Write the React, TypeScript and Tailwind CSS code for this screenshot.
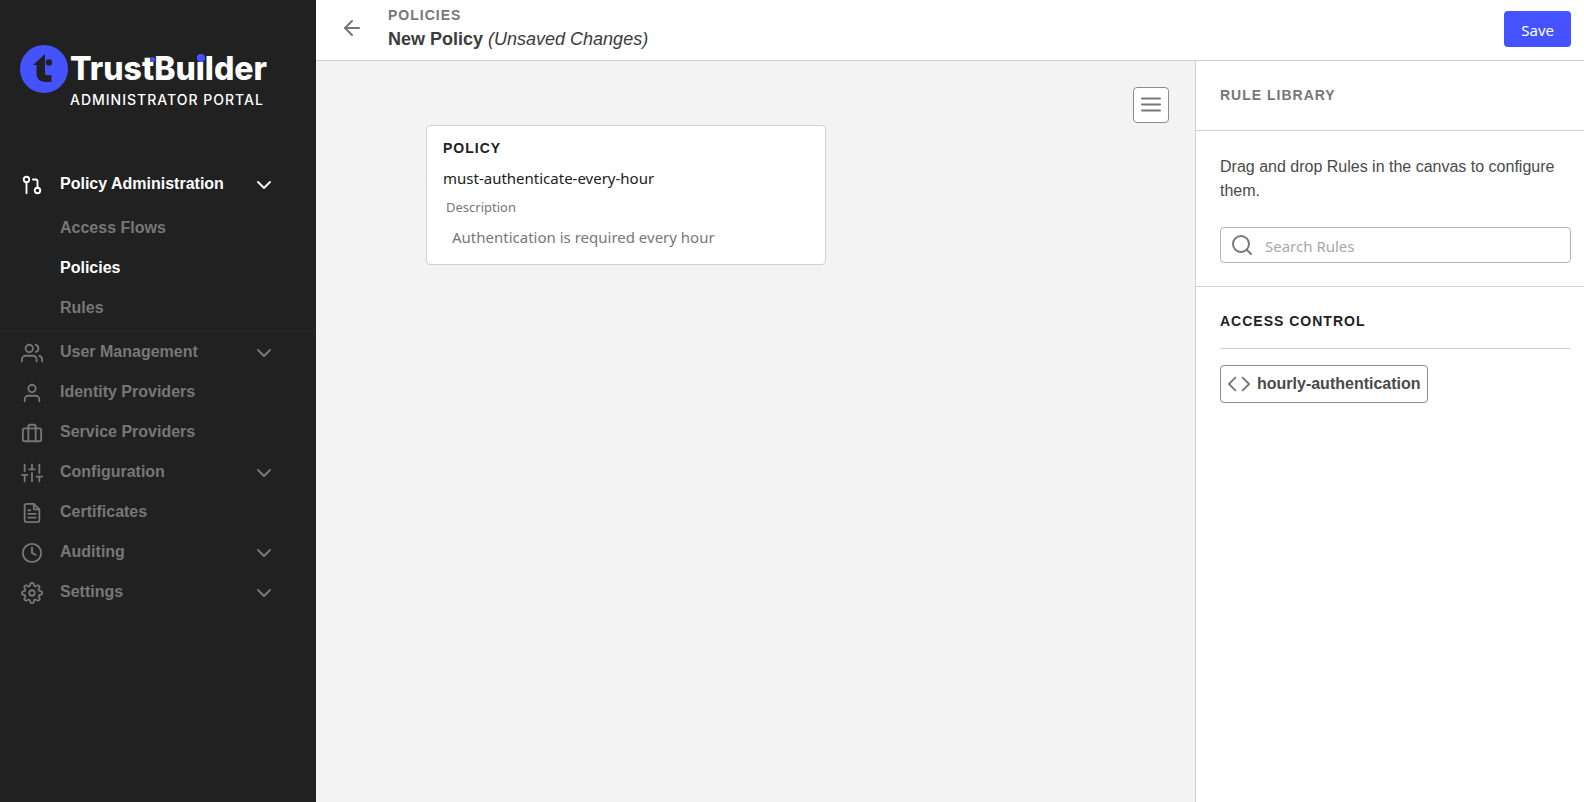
import type { ReactNode } from "react";
import {
    FiArrowLeft,
    FiChevronDown,
    FiClock,
    FiFileText,
    FiGitPullRequest,
    FiSearch,
    FiSettings,
    FiSliders,
    FiUser,
    FiUsers,
} from "react-icons/fi";

type NavItem = {
    label: string;
    icon: ReactNode;
    children?: string[];
    expandable?: boolean;
};

const ACTIVE_PAGE = "Policies";

// Suitcase with two straps
function SuitcaseIcon() {
    return (
        <svg
            width="22"
            height="22"
            viewBox="0 0 24 24"
            fill="none"
            stroke="currentColor"
            strokeWidth="2"
            strokeLinecap="round"
            strokeLinejoin="round"
            aria-hidden="true"
        >
            <rect x="2" y="7" width="20" height="14" rx="2" />
            <path d="M8 21V5a2 2 0 0 1 2-2h4a2 2 0 0 1 2 2v16" />
        </svg>
    );
}

const navItems: NavItem[] = [
    {
        label: "Policy Administration",
        icon: <FiGitPullRequest size={22} />,
        children: ["Access Flows", "Policies", "Rules"],
        expandable: true,
    },
    { label: "User Management", icon: <FiUsers size={22} />, expandable: true },
    { label: "Identity Providers", icon: <FiUser size={22} /> },
    { label: "Service Providers", icon: <SuitcaseIcon /> },
    { label: "Configuration", icon: <FiSliders size={22} />, expandable: true },
    { label: "Certificates", icon: <FiFileText size={22} /> },
    { label: "Auditing", icon: <FiClock size={22} />, expandable: true },
    { label: "Settings", icon: <FiSettings size={22} />, expandable: true },
];

function Logo() {
    return (
        <div className="flex gap-0.5 pt-[45px] pl-5 text-white">
            <svg width="48" height="48" viewBox="0 0 48 48" className="shrink-0" aria-hidden="true">
                <circle cx="24" cy="24" r="24" fill="#4552ff" />
                <path
                    d="M25 9v19c0 1.600.6 2.300 2 2.300h4.500V37H25.500c-5.800 0-9-3.200-9-8.700V20H13z"
                    fill="#212121"
                />
                <circle cx="29" cy="17.500" r="3.200" fill="#212121" />
            </svg>
            <div className="pt-2">
                <p className="font-[Inter,sans-serif] text-[32px] leading-8 font-extrabold">
                    Trus
                    <span className="relative">
                        t
                        <span className="absolute top-2 -right-px size-[5px] rounded-full bg-[#4552ff]" />
                    </span>
                    Bu
                    <span className="relative">
                        i
                        <span className="absolute top-[5px] left-px size-2 rounded-full bg-[#4552ff]" />
                    </span>
                    lder
                </p>
                <p className="pt-1 font-[Inter,sans-serif] text-[14px] leading-[22px] font-medium tracking-[1px]">
                    ADMINISTRATOR PORTAL
                </p>
            </div>
        </div>
    );
}

function NavRow({ item }: { item: NavItem }) {
    const open = !!item.children;
    const rowClass = `flex h-10 w-full items-center pl-5 pr-10 text-left ${
        open ? "text-white" : "text-[#777777]"
    }`;
    const content = (
        <>
            <span className="mr-4 flex w-6 justify-center pt-0.5">{item.icon}</span>
            <span className="flex-1">{item.label}</span>
            {item.expandable && <FiChevronDown size={24} className="mt-0.5" />}
        </>
    );

    return (
        <li>
            {item.expandable ? (
                <button type="button" aria-expanded={open} className={rowClass}>
                    {content}
                </button>
            ) : (
                <a href="#" className={rowClass}>
                    {content}
                </a>
            )}
            {item.children && (
                <ul className="border-b border-[#272727] pt-1 pb-[3px]">
                    {item.children.map((child) => (
                        <li key={child}>
                            <a
                                href="#"
                                className={`flex h-10 items-center pl-15 ${
                                    child === ACTIVE_PAGE ? "text-white" : "text-[#777777]"
                                }`}
                            >
                                {child}
                            </a>
                        </li>
                    ))}
                </ul>
            )}
        </li>
    );
}

function Sidebar() {
    return (
        <aside className="w-79 shrink-0 bg-[#212121]">
            <Logo />
            <nav className="pt-[53px] font-bold">
                <ul>
                    {navItems.map((item) => (
                        <NavRow key={item.label} item={item} />
                    ))}
                </ul>
            </nav>
        </aside>
    );
}

function Header() {
    return (
        <header className="flex items-start border-b border-[#d0d0d0] bg-white pr-[13px] pb-[9px]">
            <button type="button" aria-label="Back" className="mt-4 ml-6 text-[#777777]">
                <FiArrowLeft size={24} />
            </button>
            <div className="flex-1 pt-[7px] pl-6">
                <p className="text-sm leading-4 font-bold tracking-[1px] text-[#777777]">
                    POLICIES
                </p>
                <h1 className="pt-1 text-lg leading-6 font-bold text-[#3c3c3c]">
                    New Policy <em className="font-normal">(Unsaved Changes)</em>
                </h1>
            </div>
            <button
                type="button"
                className="mt-[11px] h-9 rounded-sm bg-[#4552ff] px-[17px] pt-0.5 font-['Noto_Sans',sans-serif] text-[15px] text-white"
            >
                Save
            </button>
        </header>
    );
}

function Canvas() {
    return (
        <section className="flex flex-1 items-start justify-between bg-[#f3f3f3] pr-[26px] pl-[110px]">
            <article className="mt-16 w-100 rounded-sm border border-[#d0d0d0] bg-white px-4 pt-3 pb-[15px] font-['Noto_Sans',sans-serif]">
                <h2 className="font-['Liberation_Sans',sans-serif] text-sm leading-5 font-bold tracking-[1px] text-[#212121]">
                    POLICY
                </h2>
                <p className="pt-2 text-[15px] leading-6 text-[#212121]">
                    must-authenticate-every-hour
                </p>
                <div className="pl-[3px] text-[#777777]">
                    <p className="pt-[7px] text-[13px] leading-5">Description</p>
                    <p className="pt-2 pl-1.5 text-[15px] leading-6">
                        Authentication is required every hour
                    </p>
                </div>
            </article>
            <button
                type="button"
                aria-label="Toggle rule library"
                className="mt-[26px] flex size-9 items-center justify-center rounded-sm border border-[#8c8c8c] bg-white text-[#777777]"
            >
                <svg width="24" height="24" viewBox="0 0 24 24" stroke="currentColor" strokeWidth="2" strokeLinecap="round">
                    <path d="M3 5.500h18M3 11.500h18M3 17.500h18" />
                </svg>
            </button>
        </section>
    );
}

function RuleLibrary() {
    return (
        <aside className="w-[389px] shrink-0 border-l border-[#d0d0d0] bg-white">
            <h2 className="border-b border-[#d0d0d0] px-6 pt-6 pb-[25px] text-sm leading-5 font-bold tracking-[1px] text-[#777777]">
                RULE LIBRARY
            </h2>
            <div className="border-b border-[#d0d0d0] pt-6 pr-[13px] pb-[23px] pl-6">
                <p className="leading-6 text-[#4a4a4a]">
                    Drag and drop Rules in the canvas to configure them.
                </p>
                <label className="mt-6 flex h-9 items-center rounded-sm border border-[#b4b4b4] px-[9px] text-[#777777]">
                    <FiSearch size={24} />
                    <input
                        type="text"
                        aria-label="Search Rules"
                        placeholder="Search Rules"
                        className="min-w-0 flex-1 pt-0.5 pl-[11px] font-['Noto_Sans',sans-serif] text-[15px] outline-none placeholder:text-[#a8a8a8]"
                    />
                </label>
            </div>
            <div className="pt-6 pr-[13px] pl-6">
                <h3 className="border-b border-[#d0d0d0] pb-[17px] text-sm leading-5 font-bold tracking-[1px] text-[#212121]">
                    ACCESS CONTROL
                </h3>
                <div
                    draggable
                    className="mt-4 inline-flex h-[38px] items-center gap-[7px] rounded-sm border border-[#8c8c8c] pr-1.5 pl-[7px] font-bold text-[#4a4a4a]"
                >
                    <svg
                        width="22"
                        height="22"
                        viewBox="0 0 24 24"
                        fill="none"
                        stroke="#777777"
                        strokeWidth="2"
                        strokeLinecap="round"
                        strokeLinejoin="round"
                        aria-hidden="true"
                    >
                        <path d="M8 5l-7 7 7 7M16 5l7 7-7 7" />
                    </svg>
                    hourly-authentication
                </div>
            </div>
        </aside>
    );
}

export default function App() {
    return (
        <div className="flex min-h-screen font-['Liberation_Sans',Arial,sans-serif] text-base">
            <Sidebar />
            <div className="flex min-w-0 flex-1 flex-col">
                <Header />
                <main className="flex flex-1">
                    <Canvas />
                    <RuleLibrary />
                </main>
            </div>
        </div>
    );
}
